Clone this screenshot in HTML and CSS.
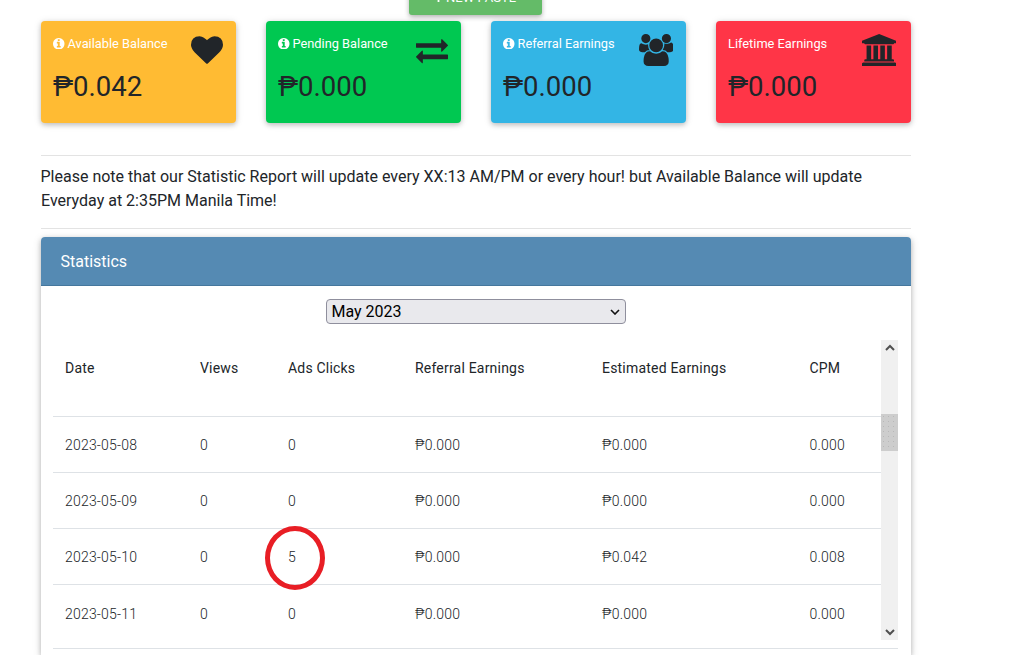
FILE: index.html
```html
<!DOCTYPE html>
<html lang="en">
<head>
  <meta charset="UTF-8">
  <meta name="viewport" content="width=device-width, initial-scale=1.0">
  <title>Dashboard</title>
  <link rel="stylesheet" href="styles.css">
</head>
<body>
  <div class="container">
    <div class="top-actions">
      <button type="button" class="new-paste-btn"><svg class="plus" viewBox="0 0 10 10"><path d="M4 0h2v4h4v2H6v4H4V6H0V4h4z"/></svg> NEW PASTE</button>
    </div>

    <div class="cards">
      <div class="card available">
        <div class="card-text">
          <div class="card-label"><svg class="info" viewBox="128 128 1536 1536"><use href="#info"/></svg>Available Balance</div>
          <div class="amount">₱0.042</div>
        </div>
        <svg class="card-icon" viewBox="0 0 1792 1792"><path d="M896 1664q-26 0-44-18l-624-602q-10-8-27.5-26T145 952.5 77 855 23.5 734 0 596q0-220 127-344t351-124q62 0 126.5 21.5t120 58T820 276t76 68q36-36 76-68t95.500-68.500 120-58T1314 128q224 0 351 124t127 344q0 221-229 450l-623 600q-18 18-44 18z"/></svg>
      </div>
      <div class="card pending">
        <div class="card-text">
          <div class="card-label"><svg class="info" viewBox="128 128 1536 1536"><use href="#info"/></svg>Pending Balance</div>
          <div class="amount">₱0.000</div>
        </div>
        <svg class="card-icon" viewBox="0 0 1792 1792"><path d="M1792 1184v192q0 13-9.5 22.5t-22.5 9.5h-1376v192q0 13-9.5 22.5t-22.5 9.5q-12 0-24-10l-319-320q-9-9-9-22 0-14 9-23l320-320q9-9 23-9 13 0 22.5 9.5t9.5 22.5v192h1376q13 0 22.5 9.5t9.5 22.5zm0-544q0 14-9 23l-320 320q-9 9-23 9-13 0-22.5-9.5t-9.5-22.5v-192h-1376q-13 0-22.5-9.5t-9.5-22.5v-192q0-13 9.5-22.5t22.5-9.5h1376v-192q0-14 9-23t23-9q12 0 24 10l319 319q9 9 9 23z"/></svg>
      </div>
      <div class="card referral">
        <div class="card-text">
          <div class="card-label"><svg class="info" viewBox="128 128 1536 1536"><use href="#info"/></svg>Referral Earnings</div>
          <div class="amount">₱0.000</div>
        </div>
        <svg class="card-icon wide" viewBox="0 0 1920 1792"><path d="M593 896q-162 5-265 128h-134q-82 0-138-40.5t-56-118.5q0-353 124-353 6 0 43.5 21t97.5 42.5 119 21.5q67 0 133-23-5 37-5 66 0 159 93 293zm1071 637q0 120-73 189.5t-194 69.5h-874q-121 0-194-69.5t-73-189.5q0-53 3.5-103.5t14-109 26.5-108.5 43-97.5 62-81 85.5-53.5 111.5-20q10 0 43 21.5t73 48 107 48 135 21.5 135-21.5 107-48 73-48 43-21.5q61 0 111.5 20t85.5 53.5 62 81 43 97.5 26.5 108.5 14 109 3.5 103.5zm-1024-1277q0 106-75 181t-181 75-181-75-75-181 75-181 181-75 181 75 75 181zm704 384q0 159-112.5 271.5t-271.5 112.5-271.5-112.5-112.5-271.5 112.5-271.5 271.5-112.5 271.5 112.5 112.5 271.5zm576 225q0 78-56 118.5t-138 40.5h-134q-103-123-265-128 93-134 93-293 0-29-5-66 66 23 133 23 59 0 119-21.5t97.5-42.5 43.5-21q124 0 124 353zm-128-609q0 106-75 181t-181 75-181-75-75-181 75-181 181-75 181 75 75 181z"/></svg>
      </div>
      <div class="card lifetime">
        <div class="card-text">
          <div class="card-label">Lifetime Earnings</div>
          <div class="amount">₱0.000</div>
        </div>
        <svg class="card-icon wide" viewBox="0 0 1920 1792"><path d="M960 0l960 384v128h-128q0 26-20.5 45t-48.5 19h-1526q-28 0-48.5-19t-20.5-45h-128v-128zm-704 640h256v768h128v-768h256v768h128v-768h256v768h128v-768h256v768h59q28 0 48.5 19t20.5 45v64h-1664v-64q0-26 20.5-45t48.5-19h59v-768zm1595 960q28 0 48.5 19t20.5 45v128h-1920v-128q0-26 20.5-45t48.5-19h1782z"/></svg>
      </div>
    </div>

    <p class="notice">Please note that our Statistic Report will update every XX:13 AM/PM or every hour! but Available Balance will update Everyday at 2:35PM Manila Time!</p>

    <div class="panel">
      <div class="panel-header">Statistics</div>
      <div class="panel-body">
        <div class="month-select">
          <select aria-label="Month">
            <option>May 2023</option>
          </select>
          <svg class="chevron" viewBox="0 0 10 6"><path d="M1 1l4 4 4-4"/></svg>
        </div>

        <div class="table-scroll">
          <table>
            <thead>
              <tr>
                <th class="col-date">Date</th>
                <th class="col-views">Views</th>
                <th class="col-clicks">Ads Clicks</th>
                <th class="col-referral">Referral Earnings</th>
                <th class="col-estimated">Estimated Earnings</th>
                <th>CPM</th>
              </tr>
            </thead>
            <tbody>
              <tr><td>2023-05-08</td><td>0</td><td>0</td><td>₱0.000</td><td>₱0.000</td><td>0.000</td></tr>
              <tr><td>2023-05-09</td><td>0</td><td>0</td><td>₱0.000</td><td>₱0.000</td><td>0.000</td></tr>
              <tr><td>2023-05-10</td><td>0</td><td><span class="marked">5</span></td><td>₱0.000</td><td>₱0.042</td><td>0.008</td></tr>
              <tr><td>2023-05-11</td><td>0</td><td>0</td><td>₱0.000</td><td>₱0.000</td><td>0.000</td></tr>
            </tbody>
          </table>
          <div class="scrollbar">
            <svg class="arrow" viewBox="0 0 10 7"><path d="M1 6l4-4 4 4"/></svg>
            <div class="thumb"></div>
            <svg class="arrow" viewBox="0 0 10 7"><path d="M1 1l4 4 4-4"/></svg>
          </div>
        </div>
        <div class="table-end"></div>
      </div>
    </div>
  </div>

  <!-- Shared icon -->
  <svg class="sprite">
    <defs>
      <path id="info" d="M1152 1376v-160q0-14-9-23t-23-9h-96v-512q0-14-9-23t-23-9h-320q-14 0-23 9t-9 23v160q0 14 9 23t23 9h96v320h-96q-14 0-23 9t-9 23v160q0 14 9 23t23 9h448q14 0 23-9t9-23zm-128-896v-160q0-14-9-23t-23-9h-192q-14 0-23 9t-9 23v160q0 14 9 23t23 9h192q14 0 23-9t9-23zm640 416q0 209-103 385.5t-279.5 279.5-385.5 103-385.5-103-279.5-279.5-103-385.5 103-385.5 279.5-279.5 385.5-103 385.5 103 279.5 279.5 103 385.5z"/>
    </defs>
  </svg>
</body>
</html>
```
FILE: styles.css
```css
*,
*::after {
  box-sizing: border-box;
}

body {
  margin: 0;
  background: #fff;
  color: #212529;
  font-family: Roboto, "Liberation Sans", sans-serif;
  font-size: 16px;
  line-height: 24px;
}

.container {
  width: 870px;
  height: 655px;
  margin-left: 41px;
}

.sprite {
  display: none;
}

/* Top button */
.top-actions {
  display: flex;
  justify-content: center;
  height: 21px;
  padding-right: 2px;
}

.new-paste-btn {
  width: 133px;
  height: 36px;
  margin-top: -21px;
  padding: 2px 0 0;
  border: none;
  border-radius: 3px;
  background: #64bb68;
  color: #fff;
  font-family: inherit;
  font-size: 13px;
  line-height: 34px;
  box-shadow: 0 2px 5px rgba(0, 0, 0, 0.3);
}

.plus {
  width: 9px;
  height: 9px;
  fill: #fff;
}

/* Balance cards */
.cards {
  display: grid;
  grid-template-columns: repeat(4, 195px);
  gap: 30px;
}

.card {
  display: flex;
  justify-content: space-between;
  height: 102px;
  padding: 12px 13px 12px 12px;
  border-radius: 4px;
  box-shadow: 0 2px 5px rgba(0, 0, 0, 0.2), 0 1px 8px rgba(0, 0, 0, 0.1);
}

.available {
  background: #ffbb33;
}

.pending {
  background: #00c851;
}

.referral {
  background: #33b5e5;
}

.lifetime {
  background: #ff3547;
}

.card-label {
  display: flex;
  align-items: center;
  gap: 3px;
  height: 21px;
  color: #fff;
  font-size: 12.8px;
  white-space: nowrap;
}

.info {
  width: 11.5px;
  height: 11.5px;
  fill: #fff;
}

.amount {
  margin-top: 14px;
  font-size: 27.5px;
  line-height: 37px;
}

.card-icon {
  flex: none;
  width: 32px;
  height: 32px;
  margin-top: 0.5px;
  fill: #212529;
}

.card-icon.wide {
  width: 34.3px;
}

.lifetime .card-icon {
  margin-right: 2px;
}

.notice {
  height: 74px;
  margin: 32px 0 8px;
  padding-top: 9px;
  border-top: 1px solid #e3e3e3;
  border-bottom: 1px solid #e3e3e3;
  text-indent: -0.5px;
}

/* Statistics panel */
.panel {
  height: 418px;
  border-radius: 4px 4px 0 0;
  background: #fff;
  box-shadow: 0 2px 5px rgba(0, 0, 0, 0.22), 0 2px 10px rgba(0, 0, 0, 0.14);
}

.panel-header {
  height: 49px;
  padding: 13px 19.5px 11px;
  border-bottom: 1px solid #45779d;
  border-radius: 4px 4px 0 0;
  background: #558ab3;
  color: #fff;
}

.panel-body {
  padding: 13px 13px 0 12px;
}

.month-select {
  position: relative;
  width: 300px;
  height: 25px;
  margin: 0 auto 16px;
}

.month-select select {
  display: block;
  width: 300px;
  height: 25px;
  padding: 0 5px;
  appearance: none;
  border: 1px solid #8f8f9d;
  border-radius: 4px;
  background: #e9e9ed;
  color: #000;
  font-family: inherit;
  font-size: 16px;
}

.chevron {
  position: absolute;
  top: 10px;
  right: 6px;
  width: 10px;
  height: 6px;
  fill: none;
  stroke: #111;
  stroke-width: 1.6;
}

.table-scroll {
  display: flex;
  height: 300px;
}

table {
  width: 828px;
  table-layout: fixed;
  border-collapse: separate;
  border-spacing: 0;
  font-size: 14px;
}

th,
td {
  padding: 0 12px;
  text-align: left;
}

th {
  height: 76px;
  padding-bottom: 20px;
  font-weight: 400;
  letter-spacing: 0.2px;
}

td {
  height: 56px;
  border-top: 1px solid #dee2e6;
  font-weight: 300;
  letter-spacing: 0.2px;
}

tr:last-child td {
  padding-top: 2px;
}

.col-date {
  width: 135px;
}

.col-views {
  width: 88px;
}

.col-clicks {
  width: 127px;
}

.col-referral {
  width: 187px;
}

.col-estimated {
  width: 207.5px;
}

.marked {
  position: relative;
}

/* Red ring around the highlighted value */
.marked::after {
  position: absolute;
  top: -23px;
  left: -23px;
  width: 60px;
  height: 64px;
  border: 5px solid #e81e25;
  border-radius: 50%;
  content: "";
}

.scrollbar {
  display: flex;
  flex-direction: column;
  align-items: center;
  width: 17px;
  padding: 4px 0;
  background: #f0f0f0;
}

.arrow {
  width: 10px;
  height: 7px;
  fill: none;
  stroke: #505050;
  stroke-width: 2;
}

.thumb {
  width: 17px;
  height: 37px;
  margin: 63px 0 auto;
  background-color: #cdcdcd;
  background-image: radial-gradient(#b8b8b8 0.7px, transparent 1px);
  background-size: 5px 5px;
}

.table-end {
  margin-top: 8px;
  border-top: 1px solid #dee2e6;
}
```
